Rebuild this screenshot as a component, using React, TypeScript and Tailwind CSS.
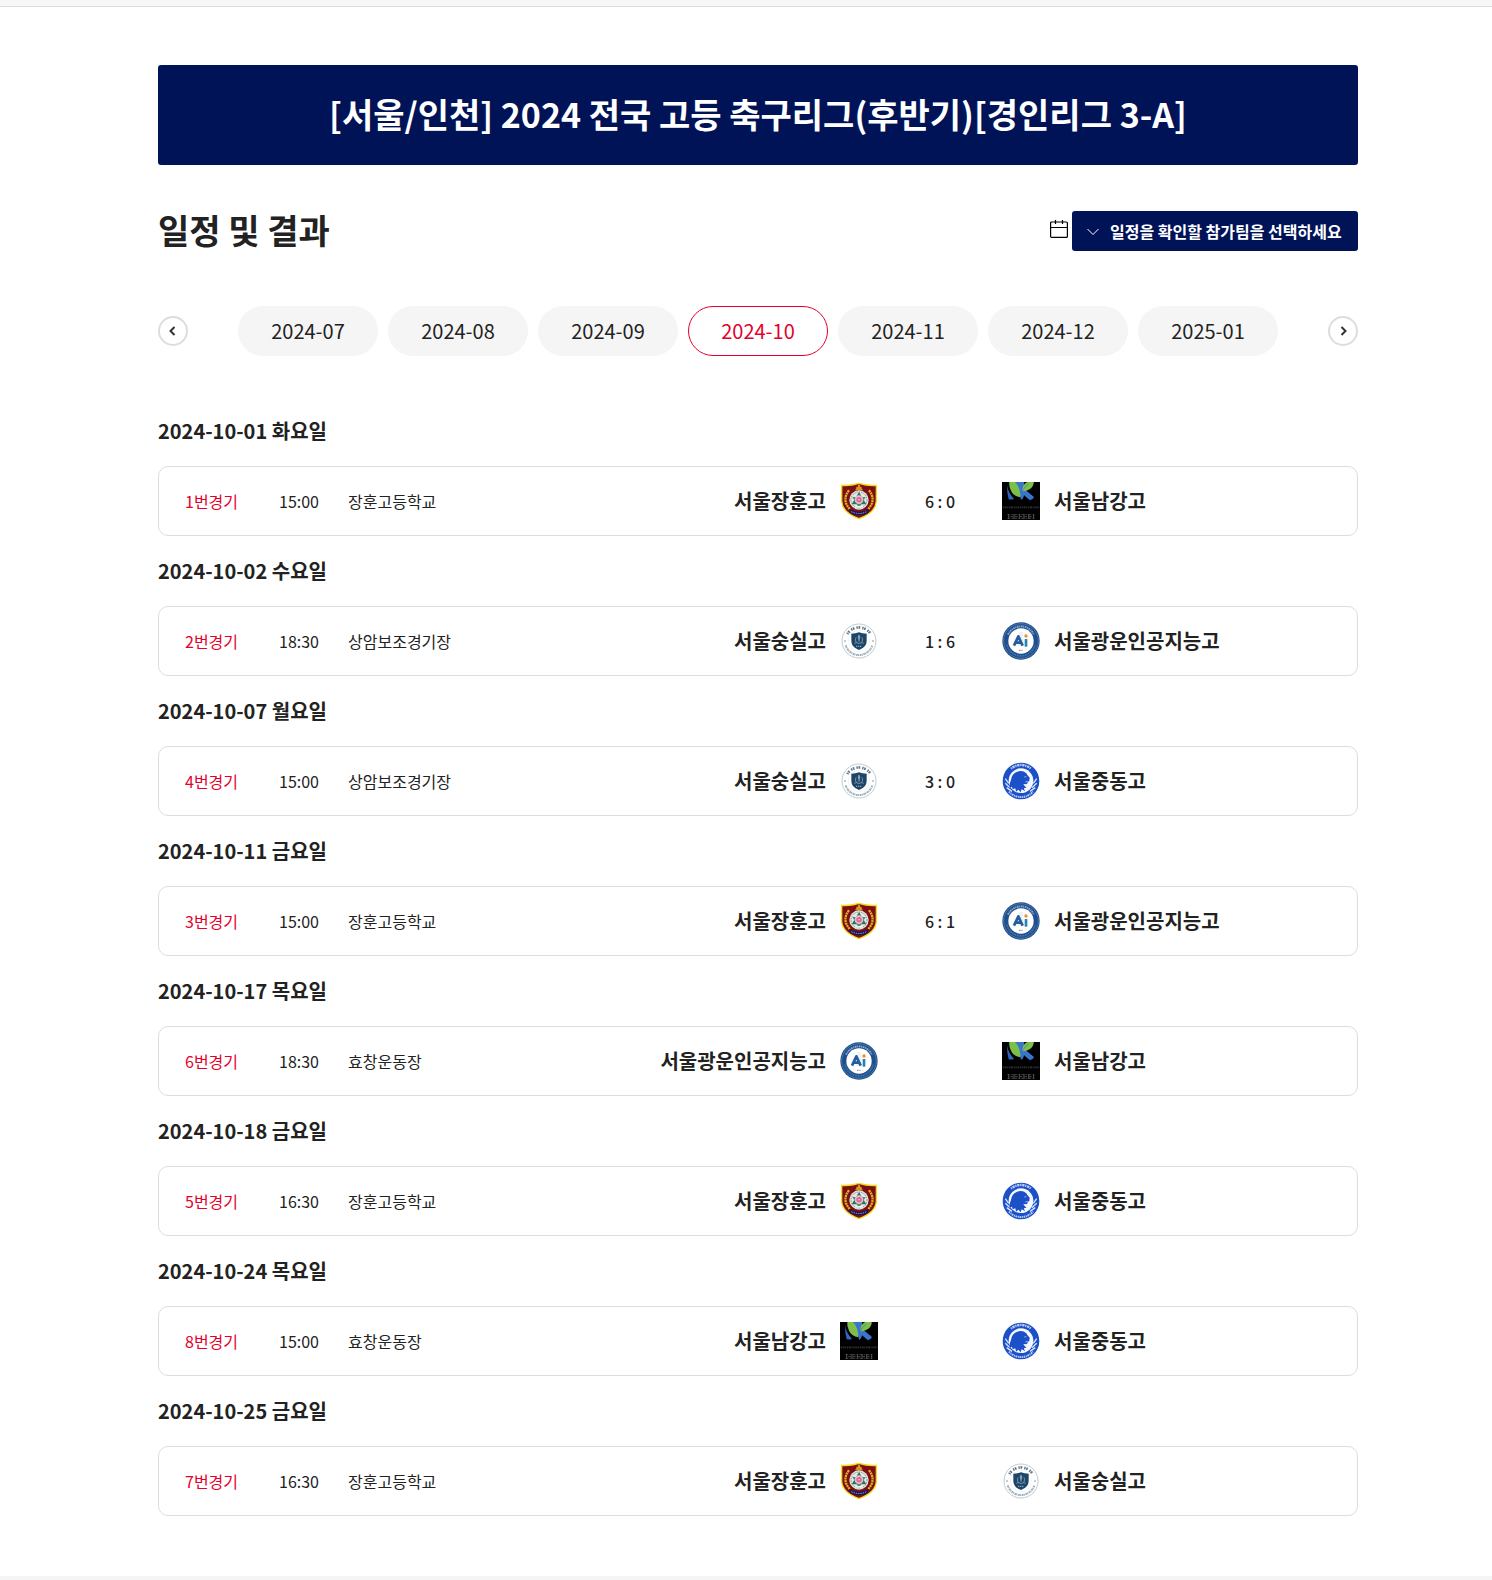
import { useState } from 'react';
import type { ReactElement } from 'react';

type TeamKey = 'janghun' | 'namgang' | 'soongsil' | 'kwangwoon' | 'joongdong';

interface Match {
    date: string;
    no: number;
    time: string;
    venue: string;
    home: TeamKey;
    away: TeamKey;
    score?: string;
}

const MONTHS = ['2024-07', '2024-08', '2024-09', '2024-10', '2024-11', '2024-12', '2025-01'];

const MATCHES: Match[] = [
    { date: '2024-10-01 화요일', no: 1, time: '15:00', venue: '장훈고등학교',   home: 'janghun',   away: 'namgang',   score: '6 : 0' },
    { date: '2024-10-02 수요일', no: 2, time: '18:30', venue: '상암보조경기장', home: 'soongsil',  away: 'kwangwoon', score: '1 : 6' },
    { date: '2024-10-07 월요일', no: 4, time: '15:00', venue: '상암보조경기장', home: 'soongsil',  away: 'joongdong', score: '3 : 0' },
    { date: '2024-10-11 금요일', no: 3, time: '15:00', venue: '장훈고등학교',   home: 'janghun',   away: 'kwangwoon', score: '6 : 1' },
    { date: '2024-10-17 목요일', no: 6, time: '18:30', venue: '효창운동장',     home: 'kwangwoon', away: 'namgang' },
    { date: '2024-10-18 금요일', no: 5, time: '16:30', venue: '장훈고등학교',   home: 'janghun',   away: 'joongdong' },
    { date: '2024-10-24 목요일', no: 8, time: '15:00', venue: '효창운동장',     home: 'namgang',   away: 'joongdong' },
    { date: '2024-10-25 금요일', no: 7, time: '16:30', venue: '장훈고등학교',   home: 'janghun',   away: 'soongsil' },
];

function JanghunCrest() {
    return (
        <svg viewBox="0 0 114 114" className="size-[38px] shrink-0" aria-hidden="true">
            <path d="M5 10 Q32 12 57 4 Q82 12 109 10 V58 Q107 92 57 110 Q7 92 5 58 Z" fill="#7d0f12" stroke="#f2dc1c" strokeWidth="4" />
            <path d="M27 25 Q4 54 30 82 M87 25 Q110 54 84 82" fill="none" stroke="#d9b428" strokeWidth="7" strokeDasharray="6 2" />
            <path d="M54 8 h6 v6 h5 v5 l4 6 H45 l4-6 v-5 h5 Z" fill="#d9941c" />
            <circle cx="57" cy="54" r="29" fill="#e3e8e5" />
            <circle cx="57" cy="54" r="24" fill="none" stroke="#7e8887" strokeWidth="3" strokeDasharray="4 3" />
            <path d="M57 30 L79 67 H35 Z" fill="#1f7a55" />
            <path d="M37 45 L77 45 L57 78 Z" fill="#3c9270" />
            <circle cx="57" cy="53" r="13" fill="#f3b7cc" />
            <circle cx="57" cy="53" r="8" fill="#e0669a" />
            <circle cx="57" cy="53" r="2" fill="#fff" />
            <path d="M46 72 h22 v5 H46 Z" fill="#f4f4f4" />
            <path d="M27 81 Q57 97 87 81 L84 93 Q57 107 30 93 Z" fill="#15195c" />
            <path d="M34 89 Q57 100 80 89" fill="none" stroke="#a3a3cc" strokeWidth="3" strokeDasharray="4 3" />
        </svg>
    );
}

function NamgangCrest() {
    return (
        <svg viewBox="0 0 114 114" className="size-[38px] shrink-0" aria-hidden="true">
            <rect width="114" height="114" fill="#000" />
            <path d="M15 10 Q19 34 36 50 Q30 54 20 52 Q15 34 15 10 Z" fill="#2f66c4" />
            <path d="M40 0 H66 V20 L96 45 Q92 54 83 54 L66 40 Q64 52 57 53 Q53 30 40 0 Z" fill="#3a74cf" />
            <path d="M22 0 H40 Q56 20 55 46 Q34 42 27 26 Q20 14 22 0 Z" fill="#7cc04a" />
            <path d="M61 27 Q60 8 76 0 H95 Q96 12 84 21 Q73 29 61 27 Z" fill="#7cc04a" />
            <path d="M61 27 Q67 14 80 6" fill="none" stroke="#3a74cf" strokeWidth="2" />
            <path d="M2 76 H112" stroke="#303030" strokeWidth="5" strokeDasharray="4 2 6 2 3 2" />
            <path d="M16 98 H98 M16 109 H98" stroke="#3f3f3f" strokeWidth="3" strokeDasharray="9 4 5 3" />
            <path d="M20 96 V111 M36 96 V111 M52 96 V111 M66 96 V111 M80 96 V111 M95 96 V111" stroke="#565656" strokeWidth="3" />
            <path d="M25 104 H92" stroke="#4a4a4a" strokeWidth="3" strokeDasharray="8 6" />
        </svg>
    );
}

function SoongsilCrest() {
    return (
        <svg viewBox="0 0 114 114" className="size-[38px] shrink-0" aria-hidden="true">
            <circle cx="57" cy="57" r="51" fill="#fff" stroke="#9fb0b7" strokeWidth="2" />
            <path d="M22 36 A41 41 0 0 1 92 36" fill="none" stroke="#5f7587" strokeWidth="8" strokeDasharray="4 2 5 6" />
            <path d="M17 70 A42 42 0 0 0 97 70" fill="none" stroke="#9aaeb9" strokeWidth="6" strokeDasharray="5 1 3 2" />
            <circle cx="15" cy="57" r="2" fill="#53718b" />
            <circle cx="99" cy="57" r="2" fill="#53718b" />
            <circle cx="57" cy="57" r="32" fill="#fff" stroke="#d8dfe3" strokeWidth="1" />
            <path d="M34 35 Q47 35 57 31 Q67 35 80 35 V57 Q80 76 57 84 Q34 76 34 57 Z" fill="#1d4568" />
            <path d="M57 38 V60 M48 46 Q44 54 49 62 M66 46 Q70 54 65 62 M43 64 Q50 59 57 65 Q64 59 71 64" fill="none" stroke="#9db5c6" strokeWidth="2" />
            <path d="M53 44 L57 38 L61 44 L57 58 Z" fill="#87a5bb" />
            <path d="M48 73 H66" stroke="#9db5c6" strokeWidth="3" strokeDasharray="4 2" />
        </svg>
    );
}

function KwangwoonCrest() {
    return (
        <svg viewBox="0 0 114 114" className="size-[38px] shrink-0" aria-hidden="true">
            <circle cx="57" cy="57" r="56" fill="#1e4f8c" />
            <circle cx="57" cy="57" r="52" fill="none" stroke="#5f88b8" strokeWidth="2" />
            <path d="M18 38 A43 43 0 0 1 96 38" fill="none" stroke="#8fabcb" strokeWidth="6" strokeDasharray="5 2 3 2" />
            <path d="M15 68 A43 43 0 0 0 99 68" fill="none" stroke="#4a79ae" strokeWidth="5" strokeDasharray="3 2" />
            <circle cx="57" cy="57" r="38" fill="#fff" />
            <path d="M51 30 H63 L66 72 H48 Z" fill="#edf2f5" />
            <path d="M36 71 L49 43 L62 71 M41 62 H57" fill="none" stroke="#245d9e" strokeWidth="8" strokeLinejoin="round" />
            <path d="M72 51 V74" stroke="#2383b5" strokeWidth="8" />
            <circle cx="72" cy="42" r="5" fill="#f08a2c" />
            <path d="M51 85 H63" stroke="#7b8c9c" strokeWidth="3" strokeDasharray="3 1" />
        </svg>
    );
}

function JoongdongCrest() {
    return (
        <svg viewBox="0 0 114 114" className="size-[38px] shrink-0" aria-hidden="true">
            <circle cx="57" cy="57" r="55" fill="#1c50c8" />
            <path d="M27 20 A46 46 0 0 1 87 20" fill="none" stroke="#bdcdf2" strokeWidth="7" strokeDasharray="4 2 7 2" />
            <path d="M21 89 A48 48 0 0 0 93 89" fill="none" stroke="#bdcdf2" strokeWidth="6" strokeDasharray="5 2 3 2" />
            <path d="M10 50 L20 64 M10 64 L24 77 M14 77 L30 88 M104 50 L94 64 M104 64 L90 77 M100 77 L84 88" stroke="#dbe5fb" strokeWidth="4" />
            <circle cx="57" cy="56" r="37" fill="#f5f8ff" />
            <path d="M30 74 L22 78 Q22 62 27 54 Q29 36 44 30 Q61 23 73 34 Q76 41 83 47 L82 57 L77 60 Q78 65 73 67 L64 66 Q67 72 74 77 L66 78 Q66 84 70 88 L59 82 L56 91 L49 83 L42 89 L40 79 L32 82 Z" fill="#1c50c8" />
            <path d="M67 45 L73 44 M70 60 L77 58" stroke="#dbe5fb" strokeWidth="2" />
        </svg>
    );
}

const TEAMS: Record<TeamKey, { name: string; Crest: () => ReactElement }> = {
    janghun:   { name: '서울장훈고',         Crest: JanghunCrest },
    namgang:   { name: '서울남강고',         Crest: NamgangCrest },
    soongsil:  { name: '서울숭실고',         Crest: SoongsilCrest },
    kwangwoon: { name: '서울광운인공지능고', Crest: KwangwoonCrest },
    joongdong: { name: '서울중동고',         Crest: JoongdongCrest },
};

function CalendarIcon() {
    return (
        <svg viewBox="0 0 18 18" className="mb-1 size-[18px]" fill="none" stroke="#000" aria-hidden="true">
            <rect x="0.6" y="2" width="16.8" height="15.4" rx="1" strokeWidth="1.2" />
            <path d="M1 7.5 H17" strokeWidth="1" />
            <path d="M5.5 0 V4 M12.5 0 V4" strokeWidth="1.2" />
        </svg>
    );
}

function ArrowButton({ direction, onClick }: { direction: 'prev' | 'next'; onClick: () => void }) {
    return (
        <button
            type="button"
            aria-label={direction === 'prev' ? '이전 달' : '다음 달'}
            onClick={onClick}
            className="flex size-[30px] shrink-0 cursor-pointer items-center justify-center rounded-full border-2 border-[#ddd] bg-white"
        >
            <svg viewBox="0 0 10 10" className="size-[10px]" fill="none" stroke="#333" strokeWidth="2" aria-hidden="true">
                <path d={direction === 'prev' ? 'M6.5 1 L2.5 5 L6.5 9' : 'M3.5 1 L7.5 5 L3.5 9'} />
            </svg>
        </button>
    );
}

function MatchCard({ match }: { match: Match }) {
    const home = TEAMS[match.home];
    const away = TEAMS[match.away];

    return (
        <div className="flex h-[70px] items-center rounded-[10px] border border-[#ddd] pl-[26px]">
            <span className="w-[94px] shrink-0 text-[#e4002b]">{match.no}번경기</span>
            <span className="w-[69px] shrink-0">{match.time}</span>
            <span className="shrink-0">{match.venue}</span>
            <div className="flex flex-1 items-center justify-end gap-[14px] text-xl font-bold">
                <span>{home.name}</span>
                <home.Crest />
            </div>
            <span className="w-[124px] shrink-0 text-center font-medium">{match.score}</span>
            <div className="flex w-[355px] items-center gap-[14px] text-xl font-bold">
                <away.Crest />
                <span>{away.name}</span>
            </div>
        </div>
    );
}

export default function App() {
    const [month, setMonth] = useState(3);

    return (
        <div className="flex min-h-screen flex-col bg-[#f5f5f5] font-['Noto_Sans_CJK_KR',sans-serif] text-base text-[#222]">
            <div className="h-[7px] border-b border-[#ddd] bg-[#f7f7f7]" />

            <main className="bg-white pt-[58px] pb-[60px] pl-6">
                <div className="mx-auto max-w-[1200px]">
                    <h1 className="flex h-[100px] items-center justify-center rounded-[3px] bg-[#001357] pb-1 text-[34px] font-bold text-white">
                        [서울/인천] 2024 전국 고등 축구리그(후반기)[경인리그 3-A]
                    </h1>

                    {/* Section title and team filter */}
                    <div className="mt-[46px] flex h-10 items-center justify-between">
                        <h2 className="pb-1 text-[34px] font-bold">일정 및 결과</h2>
                        <div className="flex items-center gap-1">
                            <CalendarIcon />
                            <div className="relative">
                                <select
                                    aria-label="참가팀 선택"
                                    defaultValue=""
                                    className="h-10 cursor-pointer appearance-none rounded-[3px] bg-[#001357] pr-4 pl-[38px] text-base font-bold text-white"
                                >
                                    <option value="">일정을 확인할 참가팀을 선택하세요</option>
                                    {Object.entries(TEAMS).map(([key, team]) => (
                                        <option key={key} value={key}>{team.name}</option>
                                    ))}
                                </select>
                                <svg viewBox="0 0 12 8" className="pointer-events-none absolute top-[17px] left-[15px] h-2 w-3" fill="none" stroke="#fff" aria-hidden="true">
                                    <path d="M0.5 1 L6 6.5 L11.5 1" />
                                </svg>
                            </div>
                        </div>
                    </div>

                    {/* Month tabs */}
                    <nav className="mt-[55px] flex items-center justify-between">
                        <ArrowButton direction="prev" onClick={() => setMonth(m => Math.max(0, m - 1))} />
                        <div className="flex gap-[10px]">
                            {MONTHS.map((label, i) => (
                                <button
                                    key={label}
                                    type="button"
                                    onClick={() => setMonth(i)}
                                    className={
                                        i === month
                                            ? 'h-[50px] w-[140px] cursor-pointer rounded-full border border-[#e4002b] bg-white text-xl text-[#e4002b]'
                                            : 'h-[50px] w-[140px] cursor-pointer rounded-full bg-[#f5f5f5] text-xl'
                                    }
                                >
                                    {label}
                                </button>
                            ))}
                        </div>
                        <ArrowButton direction="next" onClick={() => setMonth(m => Math.min(MONTHS.length - 1, m + 1))} />
                    </nav>

                    <div className="mt-10">
                        {MATCHES.map(match => (
                            <section key={match.no}>
                                <h3 className="flex h-[70px] items-center text-xl font-bold">{match.date}</h3>
                                <MatchCard match={match} />
                            </section>
                        ))}
                    </div>
                </div>
            </main>
        </div>
    );
}
